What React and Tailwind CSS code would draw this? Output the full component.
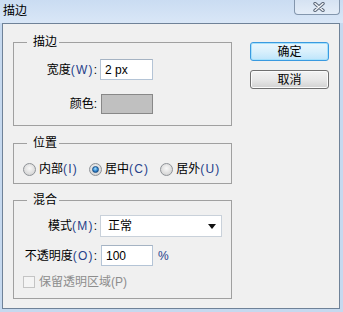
import React from 'react';

const font = { fontFamily: '"Liberation Sans", "Noto Sans CJK SC", sans-serif' };

// access key letters, e.g. (W)
const K = ({ children }) => <span className="text-[#26408a] tracking-[1.2px]">{children}</span>;

function GroupBox({ title, className = '', children }) {
  return (
    <fieldset className={`border border-[#a0a0a0] ${className}`}>
      <legend className="ml-[13px] pl-[6px] pr-[2px] text-[12px] leading-[16px] text-black">{title}</legend>
      {children}
    </fieldset>
  );
}

function Radio({ checked, label }) {
  return (
    <div className="flex items-center">
      <span className="flex h-[13px] w-[13px] items-center justify-center rounded-full border border-[#8e9297] bg-[radial-gradient(circle_at_50%_40%,#f8f8f8,#d6d6d6_75%,#c2c2c2)]">
        {checked && (
          <span className="h-[7px] w-[7px] rounded-full border border-[#1a4f86] bg-[radial-gradient(circle_at_45%_35%,#a8e0ff,#2f86cf_55%,#0f3f78)]" />
        )}
      </span>
      <span className="ml-[3px] text-[12px] leading-[16px]">{label}</span>
    </div>
  );
}

function TextBox({ value, className = '' }) {
  return (
    <div className={`flex h-[21px] items-center border border-[#b4c4d6] border-t-[#a5b3c3] bg-white pl-[4px] text-[12px] ${className}`}>
      {value}
    </div>
  );
}

export default function App() {
  return (
    <div className="flex h-[312px] w-[343px] flex-col bg-[#c6d9ef] text-black" style={font}>
      {/* title bar */}
      <div className="flex h-[23px] items-start justify-between bg-gradient-to-b from-[#cadcf2] to-[#d9e7f7]">
        <div className="pl-[3px] pt-[4px] text-[12px] leading-[14px]">描边</div>
        <button className="mr-[3px] flex h-[15px] w-[46px] items-center justify-center rounded-b-[4px] border border-t-0 border-[#8396ad] bg-gradient-to-b from-[#d5e2f2] to-[#e4edf8] pl-[3px]">
          <svg width="12" height="10" viewBox="0 0 12 10">
            <path d="M2 1.5 L10 8.5 M10 1.5 L2 8.5" stroke="#5a6678" strokeWidth="3.4" strokeLinecap="round" />
            <path d="M2 1.5 L10 8.5 M10 1.5 L2 8.5" stroke="#f4f6f9" strokeWidth="1.4" strokeLinecap="round" />
          </svg>
        </button>
      </div>

      {/* client area */}
      <div className="mb-[3px] ml-[2px] mr-[3px] flex flex-1 border border-[#6f8298] bg-[#f0f0f0]">
        <div className="ml-[10px] mt-[10px] flex w-[219px] flex-col">
          <GroupBox title="描边" className="pb-[11px]">
            <div className="mt-[9px] flex items-center">
              <span className="w-[83px] text-right text-[12px]">宽度<K>(W)</K>:</span>
              <TextBox value="2 px" className="ml-[3px] w-[53px]" />
            </div>
            <div className="mt-[14px] flex items-center">
              <span className="w-[83px] text-right text-[12px]">颜色:</span>
              <div className="ml-[4px] h-[20px] w-[52px] border border-[#888888] bg-[#c0c0c0]" />
            </div>
          </GroupBox>

          <GroupBox title="位置" className="mt-[9px] pb-[6px]">
            <div className="mt-[10px] flex h-[16px] items-center gap-[11px] pl-[9px]">
              <Radio label={<>内部<K>(I)</K></>} />
              <Radio checked label={<>居中<K>(C)</K></>} />
              <Radio label={<>居外<K>(U)</K></>} />
            </div>
          </GroupBox>

          <GroupBox title="混合" className="mt-[8px] pb-[8px]">
            <div className="mt-[7px] flex items-center">
              <span className="w-[83px] text-right text-[12px]">模式<K>(M)</K>:</span>
              <div className="ml-[3px] flex h-[22px] w-[122px] items-center justify-between border border-[#c9d1da] bg-white pl-[7px] pr-[5px] text-[12px]">
                <span>正常</span>
                <svg width="8" height="5" viewBox="0 0 8 5">
                  <path d="M0 0 H8 L4 5 Z" fill="#111" />
                </svg>
              </div>
            </div>
            <div className="mt-[8px] flex items-center">
              <span className="w-[83px] text-right text-[12px]">不透明度<K>(O)</K>:</span>
              <TextBox value="100" className="ml-[4px] w-[52px]" />
              <span className="ml-[5px] text-[12px] text-[#26408a]">%</span>
            </div>
            <div className="mt-[8px] flex h-[16px] items-center pl-[9px]">
              <span className="h-[12px] w-[12px] border border-[#c4c4c4] bg-[#f4f4f4]" />
              <span className="ml-[4px] text-[12px] leading-[16px] text-[#8d8d8d]">保留透明区域(P)</span>
            </div>
          </GroupBox>
        </div>

        {/* buttons */}
        <div className="ml-[18px] mt-[18px] flex w-[79px] flex-col">
          <button className="h-[19px] rounded-[3px] border border-[#3a9ae0] bg-gradient-to-b from-[#eaf6fd] via-[#d9f0fc] to-[#bee5fb] text-[12px] leading-[16px] shadow-[inset_0_0_0_1px_#a6e1fb]">
            确定
          </button>
          <button className="mt-[9px] h-[19px] rounded-[3px] border border-[#707070] bg-gradient-to-b from-[#f3f3f3] via-[#e8e8e8] to-[#d2d2d2] text-[12px] leading-[16px] shadow-[inset_0_0_0_1px_#fbfbfb]">
            取消
          </button>
        </div>
      </div>
    </div>
  );
}
